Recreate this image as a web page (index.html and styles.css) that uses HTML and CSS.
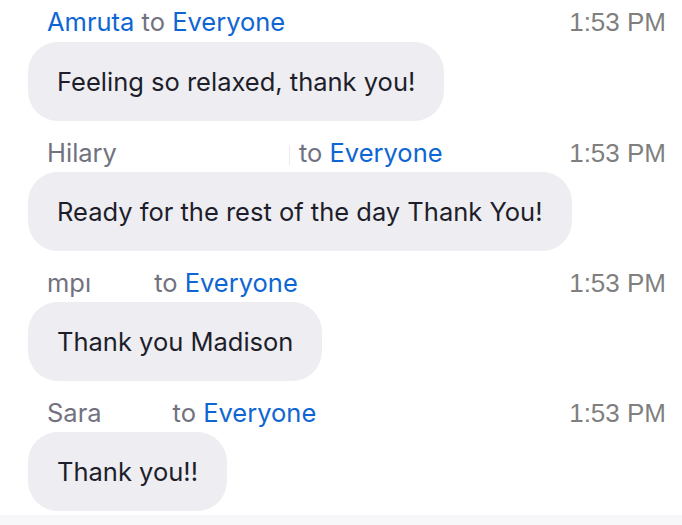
FILE: index.html
```html
<!DOCTYPE html>
<html>
<head>
<meta charset="utf-8">
<link rel="stylesheet" href="styles.css">
</head>
<body>
<div class="chat">
  <div class="msg">
    <div class="head first">
      <div class="who"><span class="name blue">Amruta</span> <span class="to">to</span> <span class="blue">Everyone</span></div>
      <div class="time">1:53 PM</div>
    </div>
    <div class="bubble">Feeling so relaxed, thank you!</div>
  </div>
  <div class="msg">
    <div class="head">
      <div class="who"><span class="name">Hilary</span><span class="redact r-hilary"></span><span class="to">to</span> <span class="blue">Everyone</span></div>
      <div class="time">1:53 PM</div>
    </div>
    <div class="bubble">Ready for the rest of the day Thank You!</div>
  </div>
  <div class="msg">
    <div class="head">
      <div class="who"><span class="name">mpı</span><span class="redact r-mp"></span><span class="to">to</span> <span class="blue">Everyone</span></div>
      <div class="time">1:53 PM</div>
    </div>
    <div class="bubble">Thank you Madison</div>
  </div>
  <div class="msg">
    <div class="head">
      <div class="who"><span class="name">Sara</span><span class="redact r-sara"></span><span class="to">to</span> <span class="blue">Everyone</span></div>
      <div class="time">1:53 PM</div>
    </div>
    <div class="bubble">Thank you!!</div>
  </div>
</div>
<div class="footer"></div>
</body>
</html>
```
FILE: styles.css
```css
html, body {
  margin: 0;
  padding: 0;
  background: #ffffff;
}
body {
  width: 682px;
  height: 525px;
  overflow: hidden;
  display: flex;
  flex-direction: column;
  font-family: "Inter", "Liberation Sans", sans-serif;
}
.chat {
  flex: 1;
  display: flex;
  flex-direction: column;
}
.msg {
  display: flex;
  flex-direction: column;
  align-items: flex-start;
}
.head {
  align-self: stretch;
  display: flex;
  justify-content: space-between;
  align-items: center;
  padding: 17px 16px 4px 47px;
  height: 30px;
  font-size: 25.5px;
  line-height: 30px;
}
.head.first {
  padding-top: 7px;
  padding-bottom: 5px;
}
.who {
  white-space: pre;
  color: #72727f;
}
.blue {
  color: #0e66d3;
}
.name {
  color: #72727f;
}
.name.blue {
  color: #0e66d3;
}
.to {
  color: #72727f;
}
.redact {
  display: inline-block;
  height: 20px;
  vertical-align: middle;
}
.r-hilary {
  width: 172px;
  border-right: 1px solid #ececec;
  margin-right: 9px;
}
.r-mp {
  width: 63px;
}
.r-sara {
  width: 71px;
}
.time {
  font-family: "Liberation Sans", Arial, sans-serif;
  font-size: 26px;
  color: #7f7f7f;
}
.bubble {
  margin-left: 28px;
  padding: 0 29px;
  height: 79px;
  display: flex;
  align-items: center;
  border-radius: 30px;
  background: #ededf2;
  color: #1e1e2a;
  font-size: 25.5px;
  line-height: 30px;
}
.footer {
  height: 10px;
  background: #f7f7fa;
}
```
